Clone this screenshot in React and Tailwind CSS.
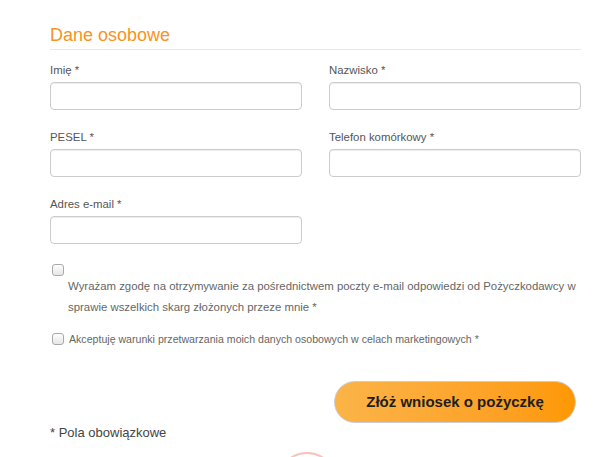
import React from 'react';

// Simple personal data form (loan application step)
const Field = ({ label }) => (
  <div className="flex flex-col">
    <label className="text-[11.4px] leading-[16px] text-[#555] mb-[4px]">{label}</label>
    <input
      type="text"
      className="h-[28px] w-full rounded-[4px] border border-[#ccc] bg-white shadow-[inset_0_1px_1px_rgba(0,0,0,0.075)] outline-none"
    />
  </div>
);

const Checkbox = () => (
  <span className="inline-block w-[12px] h-[12px] rounded-[3px] border border-[#a9a9a9] bg-gradient-to-b from-[#fdfdfd] to-[#e6e6e6] shrink-0" />
);

const App = () => {
  return (
    <div className="w-[600px] h-[457px] overflow-hidden bg-white font-['Liberation_Sans',Arial,sans-serif]">
      <div className="pt-[24px] pl-[50px] pr-[19px]">
        <h2 className="text-[18px] leading-[22px] text-[#f7931e] border-b border-[#e8e8e8] pb-[3px]">
          Dane osobowe
        </h2>

        <div className="grid grid-cols-[252px_252px] gap-x-[27px] gap-y-[19px] mt-[12px]">
          <Field label="Imię *" />
          <Field label="Nazwisko *" />
          <Field label="PESEL *" />
          <Field label="Telefon komórkowy *" />
          <Field label="Adres e-mail *" />
        </div>

        <div className="mt-[20px] pl-[2px]">
          <div className="h-[12px] flex">
            <Checkbox />
          </div>
          <p className="pl-[16px] text-[11.4px] leading-[21px] text-[#666]">
            Wyrażam zgodę na otrzymywanie za pośrednictwem poczty e-mail odpowiedzi od Pożyczkodawcy w sprawie wszelkich skarg złożonych przeze mnie *
          </p>
          <div className="flex items-center gap-[5px] mt-[13px] h-[16px]">
            <Checkbox />
            <span className="text-[10.6px] leading-[16px] text-[#666]">
              Akceptuję warunki przetwarzania moich danych osobowych w celach marketingowych *
            </span>
          </div>
        </div>

        <div className="flex justify-end pr-[5px] mt-[34px]">
          <button className="w-[242px] h-[42px] rounded-full border border-[#c9cdd6] bg-gradient-to-r from-[#fbb447] to-[#fe9800] text-[15px] font-bold text-[#1e1e1e]">
            Złóż wniosek o pożyczkę
          </button>
        </div>

        <p className="mt-0 text-[13px] leading-[20px] text-[#444]">* Pola obowiązkowe</p>

        <div className="ml-[227px] mt-[9px] w-[60px] h-[60px] rounded-full border-2 border-[#f6c4bd]" />
      </div>
    </div>
  );
};

export default App;
